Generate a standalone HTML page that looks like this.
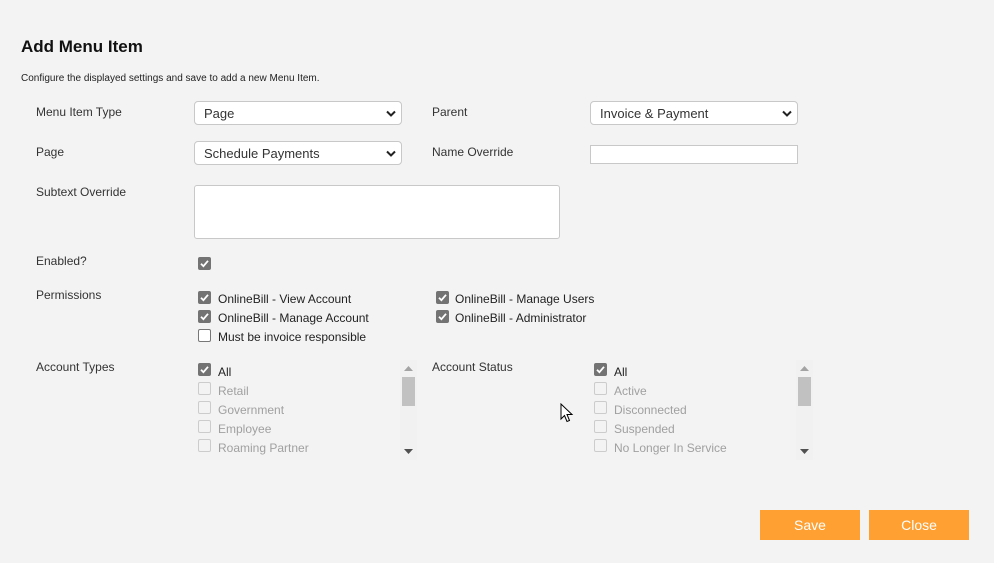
<!DOCTYPE html>
<html><head><meta charset="utf-8">
<style>
*{box-sizing:border-box;margin:0;padding:0}
body{width:994px;height:563px;background:#f3f3f3;font-family:"Liberation Sans",Arial,sans-serif;color:#222;position:relative;overflow:hidden}
.a{position:absolute;white-space:nowrap}
.lbl{font-size:12px;color:#333}
.sel{position:absolute;height:24px;width:208px;border:1px solid #c8c8c8;border-radius:4px;background:#fff;font-size:13px;color:#333;padding:4px 0 0 9px}
.sel svg{position:absolute;right:5px;top:8px}
.cb{position:absolute;width:13px;height:13px;border-radius:2px}
.cb.on{background:#737373}
.cb.off{border:1px solid #777;background:#fff}
.cb.dis{border:1px solid #ccc;background:#f3f3f3}
.t{position:absolute;font-size:12px;color:#222;white-space:nowrap}
.t.d{color:#a0a0a0}
.btn{position:absolute;top:510px;width:100px;height:30px;background:#ffa033;color:#fff;font-size:14px;text-align:center;line-height:30px}
.sb{position:absolute;width:17px;height:100px;background:#f1f1f1}
.sb .th{position:absolute;left:2px;top:17px;width:13px;height:29px;background:#c1c1c1}
</style></head><body>
<div class="a" style="left:21px;top:37px;font-size:17px;font-weight:bold;color:#111">Add Menu Item</div>
<div class="a" style="left:21px;top:73px;font-size:10px;color:#222">Configure the displayed settings and save to add a new Menu Item.</div>

<div class="a lbl" style="left:36px;top:105px">Menu Item Type</div>
<div class="a lbl" style="left:36px;top:145px">Page</div>
<div class="a lbl" style="left:36px;top:185px">Subtext Override</div>
<div class="a lbl" style="left:36px;top:254px">Enabled?</div>
<div class="a lbl" style="left:36px;top:288px">Permissions</div>
<div class="a lbl" style="left:36px;top:360px">Account Types</div>
<div class="a lbl" style="left:432px;top:105px">Parent</div>
<div class="a lbl" style="left:432px;top:145px">Name Override</div>
<div class="a lbl" style="left:432px;top:360px">Account Status</div>

<div class="sel" style="left:194px;top:101px">Page<svg width="10" height="7" viewBox="0 0 10 7"><path d="M1 1.5L5 5.5L9 1.5" stroke="#222" stroke-width="2" fill="none"/></svg></div>
<div class="sel" style="left:194px;top:141px">Schedule Payments<svg width="10" height="7" viewBox="0 0 10 7"><path d="M1 1.5L5 5.5L9 1.5" stroke="#222" stroke-width="2" fill="none"/></svg></div>
<div class="sel" style="left:590px;top:101px">Invoice &amp; Payment<svg width="10" height="7" viewBox="0 0 10 7"><path d="M1 1.5L5 5.5L9 1.5" stroke="#222" stroke-width="2" fill="none"/></svg></div>
<div class="a" style="left:590px;top:145px;width:208px;height:19px;border:1px solid #c8c8c8;background:#fff"></div>
<div class="a" style="left:194px;top:185px;width:366px;height:54px;border:1px solid #c8c8c8;border-radius:3px;background:#fff"></div>

<svg width="0" height="0" style="position:absolute"><defs><symbol id="ck" viewBox="0 0 13 13"><path d="M3 6.8L5.4 9.2L10 3.8" stroke="#fff" stroke-width="1.8" fill="none"/></symbol></defs></svg>

<div class="cb on" style="left:198px;top:257px"><svg width="13" height="13"><use href="#ck"/></svg></div>

<div class="cb on" style="left:198px;top:291px"><svg width="13" height="13"><use href="#ck"/></svg></div>
<div class="t" style="left:218px;top:292px">OnlineBill - View Account</div>
<div class="cb on" style="left:198px;top:310px"><svg width="13" height="13"><use href="#ck"/></svg></div>
<div class="t" style="left:218px;top:311px">OnlineBill - Manage Account</div>
<div class="cb off" style="left:198px;top:329px"></div>
<div class="t" style="left:218px;top:330px">Must be invoice responsible</div>
<div class="cb on" style="left:436px;top:291px"><svg width="13" height="13"><use href="#ck"/></svg></div>
<div class="t" style="left:455px;top:292px">OnlineBill - Manage Users</div>
<div class="cb on" style="left:436px;top:310px"><svg width="13" height="13"><use href="#ck"/></svg></div>
<div class="t" style="left:455px;top:311px">OnlineBill - Administrator</div>

<!-- account types list -->
<div class="a" style="left:194px;top:360px;width:222px;height:98px;overflow:hidden">
 <div class="cb on" style="left:4px;top:3px"><svg width="13" height="13"><use href="#ck"/></svg></div>
 <div class="t" style="left:24px;top:5px">All</div>
 <div class="cb dis" style="left:4px;top:22px"></div><div class="t d" style="left:24px;top:24px">Retail</div>
 <div class="cb dis" style="left:4px;top:41px"></div><div class="t d" style="left:24px;top:43px">Government</div>
 <div class="cb dis" style="left:4px;top:60px"></div><div class="t d" style="left:24px;top:62px">Employee</div>
 <div class="cb dis" style="left:4px;top:79px"></div><div class="t d" style="left:24px;top:81px">Roaming Partner</div>
 <div class="cb dis" style="left:4px;top:98px"></div>
</div>
<div class="sb" style="left:400px;top:360px"><div class="th"></div>
 <svg class="a" style="left:4px;top:6px" width="9" height="5"><path d="M0 5L4.5 0L9 5Z" fill="#a3a3a3"/></svg>
 <svg class="a" style="left:4px;top:89px" width="9" height="5"><path d="M0 0L4.5 5L9 0Z" fill="#505050"/></svg></div>

<!-- account status list -->
<div class="a" style="left:590px;top:360px;width:222px;height:98px;overflow:hidden">
 <div class="cb on" style="left:4px;top:3px"><svg width="13" height="13"><use href="#ck"/></svg></div>
 <div class="t" style="left:24px;top:5px">All</div>
 <div class="cb dis" style="left:4px;top:22px"></div><div class="t d" style="left:24px;top:24px">Active</div>
 <div class="cb dis" style="left:4px;top:41px"></div><div class="t d" style="left:24px;top:43px">Disconnected</div>
 <div class="cb dis" style="left:4px;top:60px"></div><div class="t d" style="left:24px;top:62px">Suspended</div>
 <div class="cb dis" style="left:4px;top:79px"></div><div class="t d" style="left:24px;top:81px">No Longer In Service</div>
 <div class="cb dis" style="left:4px;top:98px"></div>
</div>
<div class="sb" style="left:796px;top:360px"><div class="th"></div>
 <svg class="a" style="left:4px;top:6px" width="9" height="5"><path d="M0 5L4.5 0L9 5Z" fill="#a3a3a3"/></svg>
 <svg class="a" style="left:4px;top:89px" width="9" height="5"><path d="M0 0L4.5 5L9 0Z" fill="#505050"/></svg></div>

<!-- cursor -->
<svg class="a" style="left:560px;top:403px" width="14" height="20" viewBox="0 0 14 20"><path d="M1 1L1 16L4.5 12.5L7 18.5L9.5 17.5L7 11.5L12 11.5Z" fill="#fff" stroke="#000" stroke-width="1"/></svg>

<div class="btn" style="left:760px">Save</div>
<div class="btn" style="left:869px">Close</div>
</body></html>
